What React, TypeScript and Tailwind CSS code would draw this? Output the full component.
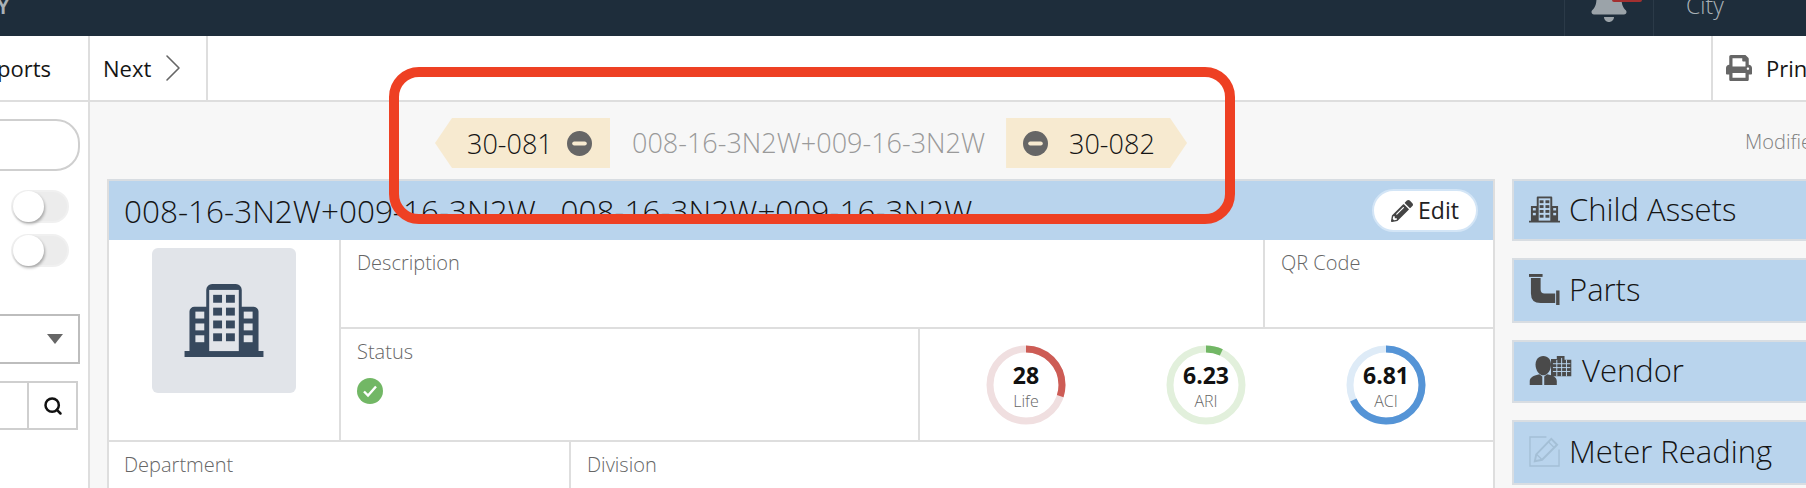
import { FaBell, FaPencilAlt, FaPrint } from 'react-icons/fa';
import { ChevronRight, Search } from 'lucide-react';

const ASSET_ID = '008-16-3N2W+009-16-3N2W';

function MinusBadge() {
  return (
    <svg viewBox="0 0 24 24" className="h-[25px] w-[25px] shrink-0">
      <circle cx="12" cy="12" r="12" fill="#666666" />
      <rect x="5" y="10" width="14" height="4" rx="2" fill="#f7ead0" />
    </svg>
  );
}

function BuildingIcon({ className }: { className: string }) {
  return (
    <svg viewBox="0 0 80 74" className={className} fill="currentColor">
      <path d="M5 68V28a5 5 0 0 1 5-5h12V6a6 6 0 0 1 6-6h24a6 6 0 0 1 6 6v17h12a5 5 0 0 1 5 5v40h5v6H0v-6z" />
      <rect x="25" y="6" width="30" height="62" fill="#e1e4e9" />
      <g>
        <rect x="29" y="11" width="9" height="8" />
        <rect x="42" y="11" width="9" height="8" />
        <rect x="29" y="24" width="9" height="8" />
        <rect x="42" y="24" width="9" height="8" />
        <rect x="29" y="37" width="9" height="8" />
        <rect x="42" y="37" width="9" height="8" />
        <rect x="29" y="50" width="9" height="8" />
        <rect x="42" y="50" width="9" height="8" />
      </g>
      <g fill="#e1e4e9">
        <rect x="11" y="28" width="9" height="7" />
        <rect x="11" y="40" width="9" height="7" />
        <rect x="11" y="52" width="9" height="7" />
        <rect x="60" y="28" width="9" height="7" />
        <rect x="60" y="40" width="9" height="7" />
        <rect x="60" y="52" width="9" height="7" />
      </g>
    </svg>
  );
}

function SmallBuilding() {
  return (
    <svg viewBox="0 0 32 28" className="h-[28px] w-[31px] shrink-0" fill="#4a4a4a">
      <path d="M2 26V11h6V2a1 1 0 0 1 1-1h14a1 1 0 0 1 1 1v9h6v15h2v2H0v-2z" />
      <rect x="10" y="3" width="12" height="23" fill="#b9d4ed" />
      <g>
        <rect x="11" y="5" width="4" height="3" />
        <rect x="17" y="5" width="4" height="3" />
        <rect x="11" y="10" width="4" height="3" />
        <rect x="17" y="10" width="4" height="3" />
        <rect x="11" y="15" width="4" height="3" />
        <rect x="17" y="15" width="4" height="3" />
        <rect x="11" y="20" width="4" height="3" />
        <rect x="17" y="20" width="4" height="3" />
      </g>
      <g fill="#b9d4ed">
        <rect x="4" y="13" width="3" height="2.5" />
        <rect x="4" y="18" width="3" height="2.5" />
        <rect x="25" y="13" width="3" height="2.5" />
        <rect x="25" y="18" width="3" height="2.5" />
      </g>
    </svg>
  );
}

function PipeIcon() {
  return (
    <svg viewBox="0 0 32 32" className="h-[31px] w-[31px] shrink-0" fill="#4a4a4a">
      <rect x="0" y="0" width="14" height="3" />
      <path d="M2 4h10v12q0 4 4 4h11v10H12Q2 30 2 20z" />
      <rect x="28" y="17" width="3.5" height="15" />
    </svg>
  );
}

function VendorIcon() {
  return (
    <svg viewBox="0 0 44 30" className="h-[29px] w-[44px] shrink-0" fill="#4a4a4a">
      <path d="M22 3h6V0h8v4h7v17H22z" />
      <g stroke="#b9d4ed" strokeWidth="1" fill="none">
        <path d="M24 8h18M24 12h18M24 16h18M28 4v17M33 2v19M38 4v17" />
      </g>
      <path d="M14 0c5 0 8 4 8 9 0 6-4 11-8 11S6 15 6 9c0-5 3-9 8-9z" />
      <path d="M0 30v-4c0-4 5-6 10-7l4 3 4-3c6 1 10 3 10 7v4z" />
      <path d="M13 21h2v9h-2z" fill="#b9d4ed" />
    </svg>
  );
}

function MeterIcon() {
  return (
    <svg viewBox="0 0 32 32" className="h-[31px] w-[31px] shrink-0" fill="none" stroke="#a4bfd6" strokeWidth="1.4">
      <path d="M18 1H1v30h30V14" />
      <path d="M6 26l1.5-7L23 3l6 6-15.5 15.5z" strokeWidth="2" />
      <path d="M20 6l6 6M8 19l5 5" />
    </svg>
  );
}

function Gauge({ value, label, percent, color, track }: { value: string; label: string; percent: number; color: string; track: string }) {
  const radius = 36;
  const circ = 2 * Math.PI * radius;
  return (
    <div className="relative h-[80px] w-[80px]">
      <svg viewBox="0 0 80 80" className="h-full w-full -rotate-90">
        <circle cx="40" cy="40" r={radius} fill="none" stroke={track} strokeWidth="7" />
        <circle cx="40" cy="40" r={radius} fill="none" stroke={color} strokeWidth="7" strokeDasharray={`${circ * percent} ${circ}`} />
      </svg>
      <div className="absolute inset-0 flex flex-col items-center pt-[16px]">
        <span className="text-[23px] leading-[28px] font-bold text-[#111]">{value}</span>
        <span className="mt-[2px] text-[16px] leading-[20px] font-light text-[#666]">{label}</span>
      </div>
    </div>
  );
}

function SideCard({ icon, label, className }: { icon: React.ReactNode; label: string; className: string }) {
  return (
    <div className={`flex items-center gap-[9px] border-2 border-r-0 border-[#d8dde2] bg-[#b9d4ed] pb-[2px] pl-[15px] text-[31px] font-light text-[#151515] ${className}`}>
      {icon}
      <span className="leading-none">{label}</span>
    </div>
  );
}

function Toggle() {
  return (
    <div className="relative h-[33px] w-[58px] rounded-full border-2 border-[#f0f0f0] bg-[#ececec]">
      <div className="absolute -top-[1px] left-0 h-[31px] w-[31px] rounded-full bg-white shadow-[1px_2px_3px_rgba(0,0,0,0.3)]" />
    </div>
  );
}

export default function App() {
  return (
    <div className="relative flex h-[488px] w-[1806px] flex-col overflow-hidden bg-white font-['Open_Sans',sans-serif] text-[#151515]">
      {/* top bar */}
      <header className="flex h-[36px] shrink-0 items-stretch justify-between bg-[#1e2d3b]">
        <span className="-mt-[10px] -ml-[4px] h-[46px] text-[24px] leading-[30px] font-semibold text-[#a9b1b7]">Y</span>
        <div className="flex items-stretch">
          <div className="flex w-[90px] justify-center border-x border-[#2b3a48]">
            <div className="relative">
              <FaBell className="-mt-[18px] h-[40px] w-[38px] text-[#9ba3a9]" />
              <div className="absolute top-0 left-[22px] h-[2px] w-[30px] rounded-b bg-[#a33030]" />
            </div>
          </div>
          <span className="-mt-[10px] w-[152px] pl-[32px] text-[23px] leading-[30px] font-light text-[#a9b1b7]">City</span>
        </div>
      </header>

      {/* toolbar */}
      <div className="flex h-[66px] shrink-0 items-stretch justify-between border-b-2 border-[#dedede]">
        <div className="flex items-stretch">
          <div className="flex w-[90px] items-center justify-end border-r-2 border-[#dedede] pr-[37px] text-[22px]">
            <span>ports</span>
          </div>
          <div className="flex w-[118px] items-center gap-[8px] border-r-2 border-[#dedede] pl-[13px] text-[22px]">
            <span>Next</span>
            <ChevronRight className="-ml-[10px] h-[48px] w-[48px] text-[#666]" strokeWidth={0.8} />
          </div>
        </div>
        <div className="flex w-[95px] items-center gap-[14px] border-l-2 border-[#dedede] pl-[13px] text-[22px]">
          <FaPrint className="h-[26px] w-[26px] shrink-0 text-[#666]" />
          <span>Print</span>
        </div>
      </div>

      <div className="flex min-h-0 flex-1">
        {/* left filters */}
        <aside className="flex w-[90px] shrink-0 flex-col border-r-2 border-[#dedede]">
          <div className="mt-[17px] -ml-[60px] h-[52px] w-[140px] rounded-[24px] border-2 border-[#cfcfcf]" />
          <div className="mt-[19px] ml-[11px]"><Toggle /></div>
          <div className="mt-[11px] ml-[11px]"><Toggle /></div>
          <div className="mt-[47px] -ml-[60px] flex h-[50px] w-[140px] items-center justify-end border-2 border-[#bdbdbd] pr-[15px]">
            <div className="h-0 w-0 border-x-[8px] border-t-[10px] border-x-transparent border-t-[#666]" />
          </div>
          <div className="mt-[17px] -ml-[60px] flex h-[49px] w-[138px] border-2 border-[#cfcfcf]">
            <div className="w-[87px] border-r-2 border-[#cfcfcf]" />
            <div className="flex flex-1 items-center justify-center">
              <Search className="h-[20px] w-[20px] text-[#111]" strokeWidth={3} />
            </div>
          </div>
        </aside>

        <main className="min-w-0 flex-1 bg-[#f7f7f7]">
          {/* breadcrumb */}
          <div className="relative flex h-[77px] items-start pt-[16px] pl-[345px] text-[27px] font-light">
            <div className="flex h-[50px] w-[175px] items-center gap-[14px] bg-[#f7ead0] pl-[32px] [clip-path:polygon(17px_0,100%_0,100%_100%,17px_100%,0_50%)]">
              <span className="leading-none">30-081</span>
              <MinusBadge />
            </div>
            <span className="ml-[22px] leading-[50px] text-[#9a9a9a]">{ASSET_ID}</span>
            <div className="ml-[21px] flex h-[50px] w-[181px] items-center gap-[21px] bg-[#f7ead0] pl-[17px] [clip-path:polygon(0_0,164px_0,100%_50%,164px_100%,0_100%)]">
              <MinusBadge />
              <span className="leading-none">30-082</span>
            </div>
            <span className="absolute top-[30px] left-[1655px] text-[20px] leading-none whitespace-nowrap text-[#808080]">Modified</span>
          </div>

          <div className="flex items-start pl-[17px]">
            {/* asset panel */}
            <section className="w-[1388px] shrink-0 border-x-2 border-[#dedede] bg-white">
              <div className="flex h-[61px] items-center justify-between border-t-2 border-[#d8dde2] bg-[#b9d4ed] pr-[15px] pl-[15px]">
                <span className="text-[31.5px] font-light whitespace-pre">{`${ASSET_ID}   ${ASSET_ID}`}</span>
                <button className="flex h-[43px] w-[106px] items-center justify-center gap-[5px] rounded-full border-2 border-[#d3e5f6] bg-white text-[23px] text-[#222]">
                  <FaPencilAlt className="h-[22px] w-[22px] text-[#444]" />
                  Edit
                </button>
              </div>
              <div className="flex border-b-2 border-[#dedede]">
                <div className="flex w-[232px] shrink-0 justify-center border-r-2 border-[#dedede] pt-[8px]">
                  <div className="flex h-[145px] w-[144px] items-center justify-center rounded-[6px] bg-[#e1e4e9] text-[#37495e]">
                    <BuildingIcon className="h-[73px] w-[80px]" />
                  </div>
                </div>
                <div className="flex-1">
                  <div className="flex h-[89px] border-b-2 border-[#dedede] text-[20px] font-light text-[#666]">
                    <div className="flex-1 pt-[8px] pl-[16px]">Description</div>
                    <div className="w-[230px] border-l-2 border-[#dedede] pt-[8px] pl-[16px]">QR Code</div>
                  </div>
                  <div className="flex h-[111px]">
                    <div className="w-[579px] shrink-0 border-r-2 border-[#dedede] pt-[8px] pl-[16px] text-[20px] font-light text-[#666]">
                      <div>Status</div>
                      <svg viewBox="0 0 26 26" className="mt-[11px] h-[26px] w-[26px]">
                        <circle cx="13" cy="13" r="13" fill="#72b765" />
                        <path d="M7 13.5l4 4 8-9" fill="none" stroke="#fff" strokeWidth="2.4" />
                      </svg>
                    </div>
                    <div className="flex flex-1 items-start gap-[100px] pt-[16px] pl-[66px]">
                      <Gauge value="28" label="Life" percent={0.3} color="#cd5c55" track="#f0dfe0" />
                      <Gauge value="6.23" label="ARI" percent={0.07} color="#72b765" track="#e2f0dc" />
                      <Gauge value="6.81" label="ACI" percent={0.68} color="#5594d6" track="#deebf7" />
                    </div>
                  </div>
                </div>
              </div>
              <div className="flex h-[60px] text-[20px] font-light text-[#666]">
                <div className="w-[462px] border-r-2 border-[#dedede] pt-[8px] pl-[15px]">Department</div>
                <div className="flex-1 pt-[8px] pl-[16px]">Division</div>
              </div>
            </section>

            {/* related items */}
            <div className="ml-[17px] flex min-w-0 flex-1 flex-col gap-[17px]">
              <SideCard icon={<SmallBuilding />} label="Child Assets" className="h-[62px]" />
              <SideCard icon={<PipeIcon />} label="Parts" className="h-[65px]" />
              <SideCard icon={<VendorIcon />} label="Vendor" className="h-[63px]" />
              <SideCard icon={<MeterIcon />} label="Meter Reading" className="h-[65px]" />
            </div>
          </div>
        </main>
      </div>

      {/* annotation drawn over the screenshot */}
      <div className="absolute top-[67px] left-[389px] h-[157px] w-[846px] rounded-[30px] border-[10px] border-[#ee4023]" />
    </div>
  );
}
